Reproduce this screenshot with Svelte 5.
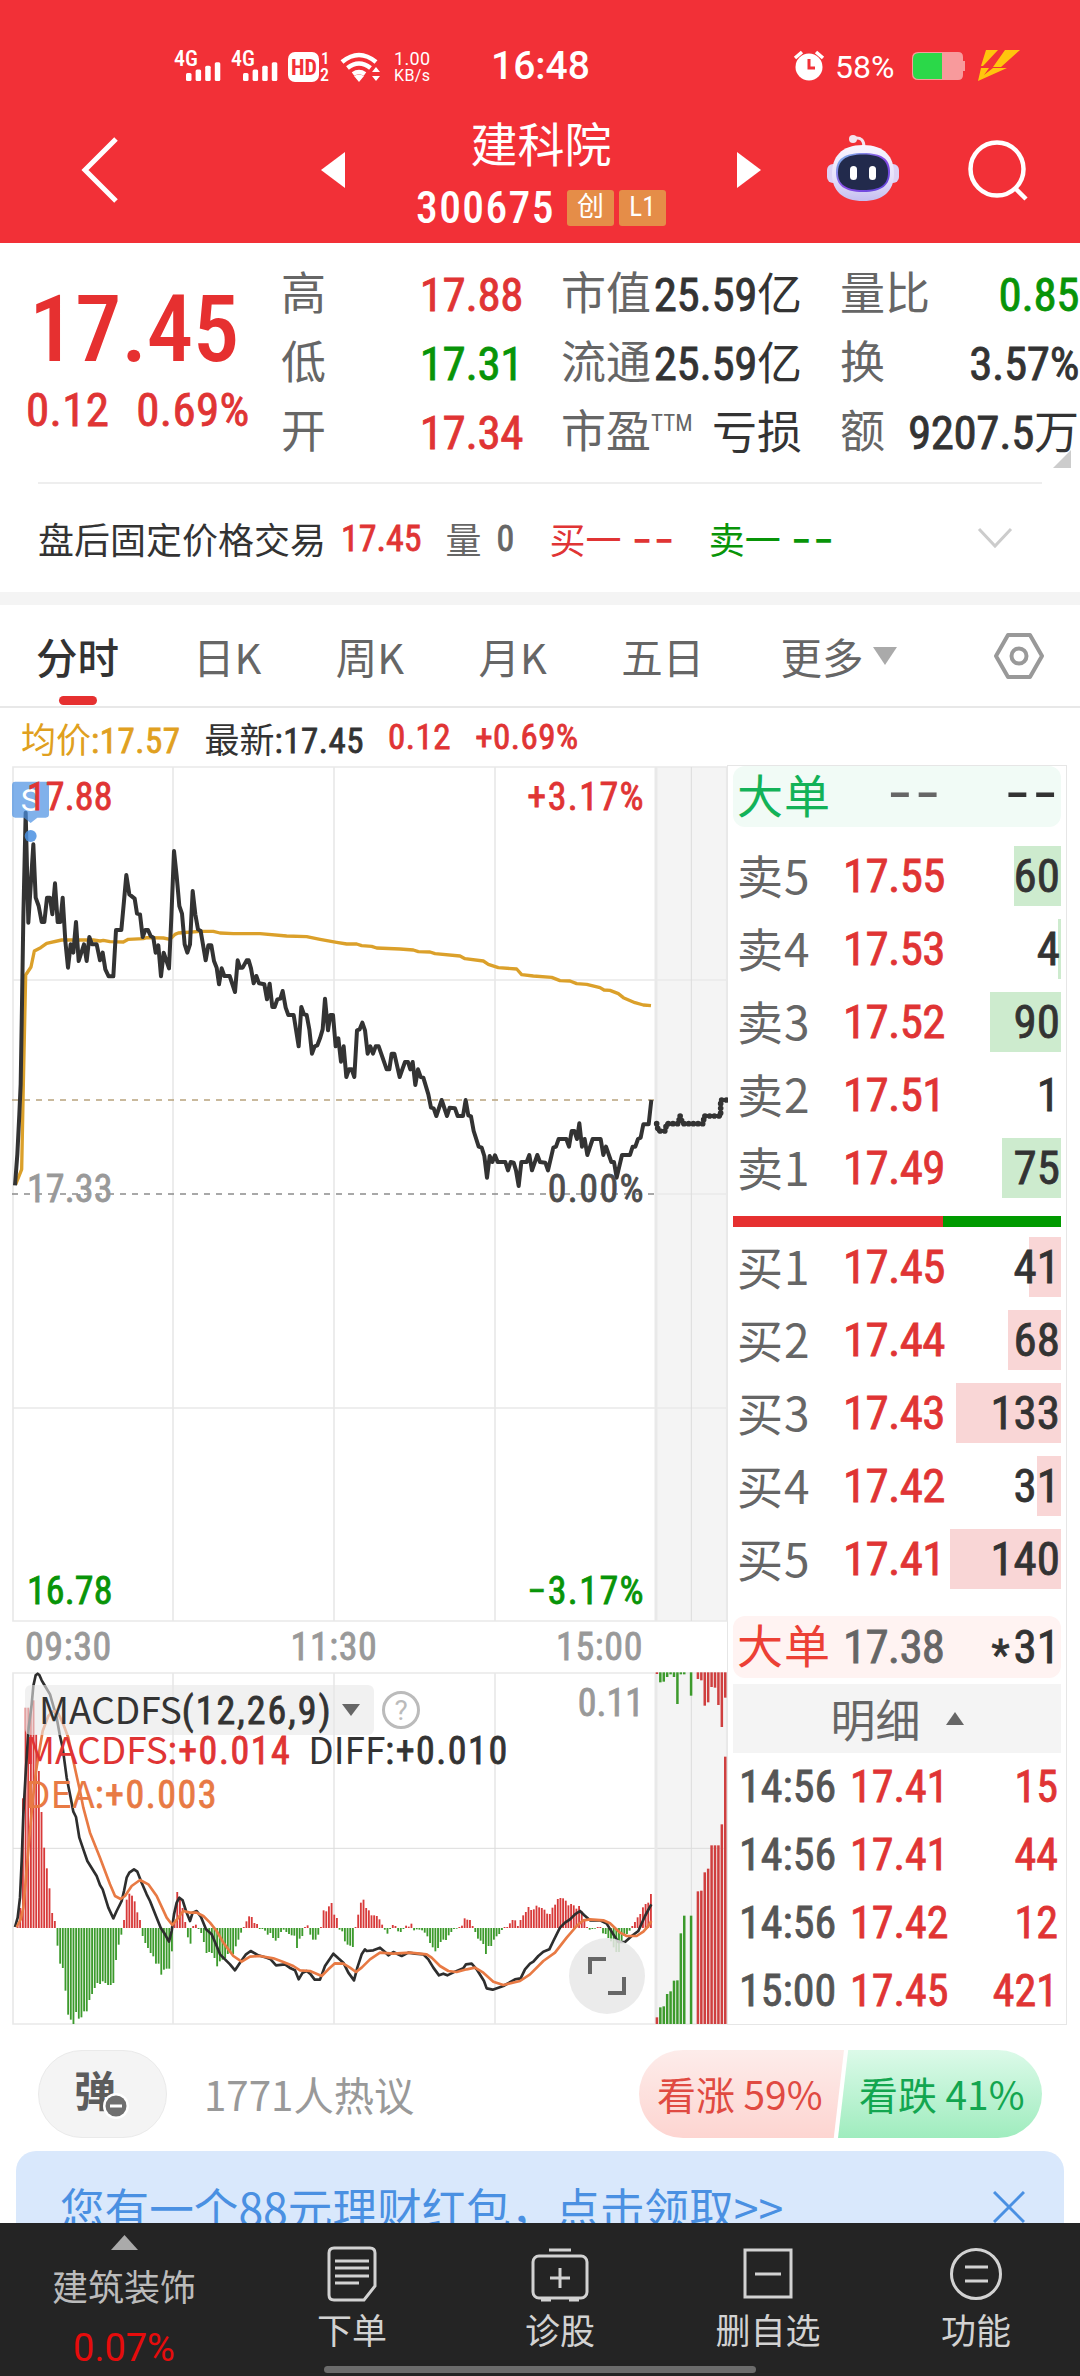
<script>
    const stats = [
        { label: '高', value: '17.88', tone: 'up' },
        { label: '市值', value: '25.59', unit: '亿' },
        { label: '量比', value: '0.85', tone: 'down' },
        { label: '低', value: '17.31', tone: 'down' },
        { label: '流通', value: '25.59', unit: '亿' },
        { label: '换', value: '3.57%' },
        { label: '开', value: '17.34', tone: 'up' },
        { label: '市盈', sup: 'TTM', value: '', unit: '亏损' },
        { label: '额', value: '9207.5', unit: '万' },
    ];

    const tabs = ['分时', '日K', '周K', '月K', '五日'];

    // bar = width of the volume bar
    const sells = [
        { label: '卖5', price: '17.55', volume: 60, bar: 47 },
        { label: '卖4', price: '17.53', volume: 4, bar: 3 },
        { label: '卖3', price: '17.52', volume: 90, bar: 71 },
        { label: '卖2', price: '17.51', volume: 1, bar: 0 },
        { label: '卖1', price: '17.49', volume: 75, bar: 59 },
    ];
    const buys = [
        { label: '买1', price: '17.45', volume: 41, bar: 32 },
        { label: '买2', price: '17.44', volume: 68, bar: 53 },
        { label: '买3', price: '17.43', volume: 133, bar: 105 },
        { label: '买4', price: '17.42', volume: 31, bar: 24 },
        { label: '买5', price: '17.41', volume: 140, bar: 111 },
    ];
    const trades = [
        { time: '14:56', price: '17.41', volume: 15 },
        { time: '14:56', price: '17.41', volume: 44 },
        { time: '14:56', price: '17.42', volume: 12 },
        { time: '15:00', price: '17.45', volume: 421 },
    ];

    const priceLine = `45,1303 52,1210 58,1090 62,1000 66,760 70,500 77,185 85,515 100,280 107,440 116,465 125,513 133,513 141,440
        150,440 157,490 165,397 173,513 181,513 188,440 196,570 204,650 212,580 220,605 228,513 236,630 252,580 260,630 268,558
        276,580 290,580 300,628 308,605 316,655 326,676 340,676 348,537 364,537 372,450 379,372 388,430 404,443 411,488 420,490
        428,558 436,537 444,537 452,555 460,560 467,605 475,583 483,676 491,605 507,652 514,500 522,300 530,375 538,465 546,488
        554,580 562,605 570,580 578,420 586,490 594,535 602,540 617,628 625,583 634,583 642,630 650,650 657,700 665,652 673,675
        689,675 705,723 713,628 720,650 728,650 740,628 746,628 753,652 761,697 769,675 777,697 793,700 801,745 809,698 817,768
        824,768 832,745 841,743 848,720 857,770 865,792 881,792 896,886 904,768 912,790 920,792 928,835 936,908 944,886 952,883
        960,862 968,835 975,743 984,838 991,792 999,792 1007,886 1015,862 1023,932 1031,886 1039,978 1047,955 1055,955 1063,978
        1071,838 1079,835 1087,815 1095,838 1103,908 1111,886 1119,908 1127,886 1136,886 1160,955 1168,955 1175,908 1183,908
        1199,978 1207,955 1215,933 1224,933 1231,955 1238,933 1246,1002 1254,955 1262,978 1270,980 1285,1030 1293,1070 1301,1072
        1309,1095 1325,1047 1341,1095 1349,1070 1365,1072 1373,1095 1389,1095 1397,1047 1405,1093 1413,1096 1421,1140 1436,1187
        1445,1190 1453,1215 1461,1280 1469,1215 1477,1233 1485,1213 1493,1233 1516,1233 1524,1258 1532,1233 1541,1235 1548,1258
        1556,1305 1564,1233 1580,1233 1588,1212 1596,1258 1612,1212 1620,1233 1636,1235 1644,1258 1660,1190 1668,1187 1676,1164
        1699,1164 1707,1187 1715,1140 1723,1140 1731,1164 1738,1117 1746,1187 1754,1164 1762,1212 1778,1164 1802,1164 1810,1212
        1818,1187 1834,1233 1842,1233 1850,1280 1866,1212 1890,1212 1898,1187 1906,1187 1914,1164 1922,1160 1930,1120 1946,1120
        1954,1047`;

    const avgLine = `47,1300 65,1255 70,1000 77,672 93,648 103,600 122,590 140,577 185,567 280,567 300,570 310,568 330,572 370,573
        385,565 430,563 440,560 490,561 510,565 525,550 535,546 600,541 640,541 660,546 700,548 780,548 860,555 920,557 960,565
        1010,574 1040,579 1070,579 1085,584 1115,586 1130,591 1200,594 1240,597 1255,602 1290,603 1305,608 1380,615 1395,623
        1450,630 1465,640 1495,650 1550,654 1565,671 1600,675 1655,679 1680,689 1710,690 1730,698 1760,700 1800,710 1812,717
        1830,718 1855,728 1870,740 1905,755 1930,762 1953,764`;

    const afterLine = `1970,1118 1975,1140 1995,1140 2000,1118 2035,1118 2040,1094 2048,1118 2110,1118 2112,1095 2162,1095
        2162,1047 2180,1047`;

    const macd = [
        0, 5, 60, 389, 661, 661, 656, 683, 580, 471, 348, 241, 179, 119, 45, 21, -53, -107, -120, -188, -260, -275, -288, -252,
        -272, -268, -250, -250, -216, -198, -180, -165, -168, -160, -165, -171, -171, -165, -96, -50, -20, 24, 85, 103, 97, 80,
        47, 24, -24, -45, -60, -75, -85, -107, -107, -140, -125, -122, -122, -70, 20, 108, 85, 60, 18, -28, -47, 6, 10, -3, -15,
        -42, -75, -72, -75, -90, -115, -100, -95, -90, -78, -75, -78, -55, -35, -14, 3, 20, 35, 33, 15, 12, -3, -3, -8, -20, -15,
        -30, -38, -30, -12, -5, -12, -18, -22, -23, -60, -32, -24, 3, 8, -20, -35, -35, -20, 3, 53, 50, 65, 75, 40, 30, -5, -10,
        -40, -50, -53, -57, 3, 40, 76, 85, 60, 53, 38, 38, 36, 26, 10, -5, -17, -3, 9, 6, -10, -12, -3, 7, 4, 13, -7, -4, -5, -7,
        -14, -25, -45, -58, -70, -60, -42, -35, -36, -22, -12, -3, -2, 3, 7, 29, 25, 24, 6, -12, -32, -38, -48, -78, -54, -54,
        -35, -25, -18, -6, 3, 3, 14, 24, 23, 6, 24, 38, 48, 63, 54, 56, 67, 62, 60, 55, 43, 42, 61, 70, 87, 90, 89, 82, 68, 72,
        68, 58, 66, 50, 25, 3, -5, -3, -2, 3, 3, -16, -18, -30, -40, -58, -72, -72, -38, -24, -18, -8, 6, 18, 32, 42, 62, 72, 76,
        102,
    ];
    const pitch = (1953 - 45) / (macd.length - 1);

    const diffLine = `45,1098 53,1070 60,1010 65,900 70,760 78,620 86,500 95,430 100,375 107,343 113,338 118,342 125,358 135,375
        150,400 160,435 170,470 180,525 188,560 200,650 212,710 220,752 228,768 238,830 250,865 262,900 290,945 300,972 308,985
        325,1040 340,1072 350,1050 365,1020 372,990 380,950 388,935 402,925 412,932 425,965 440,1000 450,1020 470,1070 482,1100
        495,1120 507,1142 515,1110 522,1060 530,1025 538,1010 548,1018 558,1050 570,1080 578,1055 590,1050 603,1068 618,1105
        635,1120 650,1155 660,1180 675,1195 690,1210 705,1228 720,1205 738,1180 752,1170 775,1183 800,1190 812,1195 828,1213
        855,1210 872,1222 885,1228 896,1255 908,1235 920,1230 932,1240 944,1256 960,1256 975,1215 1000,1178 1015,1192 1030,1205
        1045,1235 1062,1258 1072,1220 1085,1180 1095,1165 1100,1170 1120,1168 1140,1160 1155,1173 1165,1183 1180,1173 1205,1185
        1225,1175 1245,1178 1270,1180 1285,1195 1300,1220 1317,1243 1330,1238 1342,1243 1365,1232 1390,1222 1398,1210 1415,1208
        1430,1225 1452,1260 1460,1282 1478,1286 1510,1275 1545,1255 1562,1252 1575,1225 1590,1208 1600,1202 1615,1185 1630,1172
        1648,1165 1660,1140 1680,1100 1695,1085 1710,1075 1725,1060 1740,1050 1752,1062 1770,1078 1800,1078 1820,1088 1840,1120
        1855,1143 1875,1143 1895,1125 1915,1110 1935,1065 1954,1030`;

    const deaLine = `50,1098 62,1075 70,1040 78,950 88,830 98,720 108,630 118,570 128,510 145,465 160,450 175,458 190,490 205,530
        220,600 240,690 250,740 270,815 300,890 330,970 345,1005 362,1014 375,1005 395,975 420,957 445,970 470,1005 500,1070
        517,1092 535,1070 550,1050 570,1055 590,1055 610,1065 630,1085 650,1110 670,1145 700,1185 725,1202 750,1187 780,1185
        820,1192 850,1203 880,1215 900,1228 930,1230 965,1245 985,1225 1005,1207 1030,1208 1050,1220 1068,1233 1085,1220
        1110,1195 1140,1175 1180,1178 1230,1175 1280,1180 1295,1190 1320,1215 1345,1230 1370,1233 1400,1225 1425,1220 1450,1235
        1480,1262 1510,1272 1560,1260 1590,1240 1630,1200 1665,1175 1700,1130 1730,1095 1750,1078 1770,1075 1810,1078 1830,1087
        1860,1115 1880,1125 1910,1125 1930,1112 1945,1095 1954,1080`;

    // after-hours bars: [slot, from the top, from the bottom, rising]
    const afterBars = [
        [0, 5, 20, 1], [1, 30, 50, 0], [2, 28, 53, 0], [3, 14, 90, 0], [4, 6, 98, 0], [5, 14, 130, 0], [6, 95, 131, 0],
        [7, 6, 272, 0], [8, 6, 325, 0], [10, 70, 325, 0], [12, 20, 398, 1], [13, 24, 400, 1], [14, 100, 455, 1],
        [15, 90, 466, 1], [16, 44, 536, 1], [17, 46, 536, 1], [18, 98, 536, 1], [19, 164, 599, 1], [20, 76, 802, 1],
    ];
</script>


<style>
    :global(body) {
        background: #fff;
    }

    .app {
        display: flex;
        flex-direction: column;
        width: 1080px;
        height: 2376px;
        overflow: hidden;
        font-family: "Roboto Condensed", "Noto Sans CJK SC", sans-serif;
        color: #333;
        white-space: nowrap;
    }
    .cjk {
        font-family: "Noto Sans CJK SC", sans-serif;
    }
    .up { color: #e03434; }
    .down { color: #089408; }

    /* digits sit between regular and medium */
    .price p, .stats span, .fixed .num, .legend, .minute span, .axis, .macd, .book {
        -webkit-text-stroke: .8px;
    }
    .stats i, .legend i, .macd .cjk, .book .cjk, .detail, .help {
        -webkit-text-stroke: 0;
    }

    header {
        flex: none;
        height: 243px;
        background: #f23037;
        color: #fff;
    }
    .status {
        display: flex;
        align-items: center;
        padding: 48px 60px 0 172px;
        height: 36px;
        font-family: Roboto, sans-serif;
    }
    .status .clock {
        margin-left: 59px;
        font-size: 39px;
        font-weight: 500;
    }
    .status .percent {
        margin: 2px 12px 0 10px;
        font-size: 32px;
        width: 65px;
    }
    .status .alarm {
        margin-left: auto;
    }
    .status .bolt {
        margin-left: 12px;
    }

    .titlebar {
        display: flex;
        align-items: center;
        height: 159px;
        padding-top: 13px;
        box-sizing: border-box;
    }
    .titlebar .back { margin-left: 80px; }
    .titlebar .prev { margin-left: 200px; }
    .titlebar .next { margin-left: 69px; }
    .titlebar .robot { margin: -5px 0 0 66px; }
    .titlebar .search { margin-left: 67px; }
    .titlebar .name {
        width: 254px;
        margin: 10px 0 0 69px;
        text-align: center;
    }
    .name h1 {
        margin: 0;
        font-size: 47px;
        font-weight: 400;
        line-height: 66px;
    }
    .name p {
        display: flex;
        align-items: center;
        margin: 0 0 0 2px;
        height: 58px;
        font-size: 43.5px;
        font-weight: 500;
        letter-spacing: 1.4px;
    }
    .name b {
        width: 47px;
        height: 36px;
        margin-left: 5px;
        border-radius: 3px;
        background: #e58d48;
        font-size: 27px;
        font-weight: 400;
        line-height: 35px;
        letter-spacing: 0;
    }
    .name b:first-of-type {
        margin-left: 12px;
    }

    main {
        flex: 1;
        min-height: 0;
        overflow: hidden;
    }

    .quote {
        position: relative;
        display: flex;
        height: 239px;
    }
    .price {
        width: 281px;
    }
    .price strong {
        display: block;
        margin: 34px 0 0 29px;
        font-size: 93px;
        font-weight: 500;
        line-height: 106px;
        letter-spacing: -.4px;
        color: #e63030;
    }
    .price p {
        display: flex;
        gap: 27px;
        margin: 0 0 0 26px;
        font-size: 47px;
        line-height: 53px;
        letter-spacing: .3px;
    }
    .stats {
        display: grid;
        grid-template-columns: 242px 241px 239px;
        grid-auto-rows: 69px;
        column-gap: 38px;
        padding-top: 17px;
    }
    .stats div {
        display: flex;
        justify-content: space-between;
        font-size: 47px;
        line-height: 69px;
    }
    .stats label {
        font-size: 45px;
        color: #666;
    }
    .stats sup {
        font-size: 23px;
        line-height: 0;
        vertical-align: 17px;
    }
    .stats span {
        letter-spacing: -.4px;
    }
    .stats i {
        font-style: normal;
        font-size: 45px;
        letter-spacing: 0;
    }
    .corner {
        position: absolute;
        right: 9px;
        bottom: 14px;
        border: 9px solid transparent;
        border-right-color: #ccc;
        border-bottom-color: #ccc;
    }

    .fixed {
        display: flex;
        align-items: center;
        height: 108px;
        margin: 0 38px;
        border-top: 2px solid #eee;
        font-size: 36px;
    }
    .fixed span { margin-left: 15px; }
    .fixed span.gap { margin-left: 24px; }
    .fixed span.wide { margin-left: 35px; }
    .fixed span.wide.down { margin-left: 38px; }
    .fixed .muted { color: #666; }
    .fixed .num { padding-top: 2px; }
    .fixed svg { margin: 0 29px 0 auto; }
    .fixed span.dash {
        margin: 0 -5px 0 10px;
        font-size: 46px;
        line-height: 46px;
    }

    .dash {
        font-family: Inter, sans-serif;
        letter-spacing: 1px;
    }

    .band {
        height: 13px;
        background: #f4f4f4;
    }

    nav.tabs {
        display: flex;
        align-items: center;
        height: 101px;
        padding: 0 36px;
        border-bottom: 2px solid #e8e8e8;
        font-family: "Noto Sans CJK SC", sans-serif;
        font-size: 41.5px;
        color: #666;
    }
    .tabs a {
        position: relative;
        margin-right: 74.400px;
    }
    .tabs a.active {
        margin-right: 74px;
        font-weight: 500;
        color: #333;
    }
    .tabs a.active::after {
        content: "";
        position: absolute;
        left: 23px;
        bottom: -19px;
        width: 38px;
        height: 9px;
        border-radius: 5px;
        background: #e63030;
    }
    .tabs .more {
        display: flex;
        align-items: center;
        gap: 9px;
        margin-left: 2px;
    }
    .tabs .gear { margin-left: auto; }

    .legend {
        display: flex;
        align-items: center;
        height: 57px;
        padding: 2px 0 0 21px;
        box-sizing: border-box;
        font-size: 35px;
        letter-spacing: .5px;
    }
    .legend i {
        font-style: normal;
        letter-spacing: 0;
    }
    .legend span { margin-right: 24px; }
    .legend .avg { color: #e0a020; }

    .board {
        display: flex;
        height: 1260px;
        padding-left: 12px;
    }
    .charts {
        width: 715px;
    }
    .charts svg {
        display: block;
    }
    .minute, .macd {
        position: relative;
        font-size: 38px;
        line-height: 44px;
    }
    .minute { height: 857px; }
    .macd { height: 353px; }
    .minute span {
        position: absolute;
        left: 15px;
        letter-spacing: .1px;
    }
    .minute span.right {
        left: auto;
        right: 82px;
        letter-spacing: 1.4px;
    }
    .minute .high { top: 10px; }
    .minute .mid { top: 402px; color: #999; }
    .minute .mid.right { color: #4d4d4d; }
    .minute .low { top: 804px; }
    .marker text {
        font-family: Roboto, sans-serif;
    }
    .axis {
        display: flex;
        justify-content: space-between;
        height: 50px;
        padding: 0 84px 0 13px;
        font-size: 38px;
        line-height: 51px;
        letter-spacing: .6px;
        color: #999;
    }
    .chip {
        position: absolute;
        left: 13px;
        top: 13px;
        display: flex;
        align-items: center;
        gap: 9px;
        width: 349px;
        height: 50px;
        padding-left: 14px;
        box-sizing: border-box;
        border-radius: 6px;
        background: rgba(232, 232, 232, .6);
        letter-spacing: 2px;
    }
    .macd .cjk {
        font-size: 37px;
        font-style: normal;
        line-height: 40px;
        letter-spacing: 0;
    }
    .macd p {
        position: absolute;
        left: 13px;
        top: 56px;
        margin: 0;
        letter-spacing: 1.5px;
        line-height: 42px;
    }
    .macd p span { margin-right: 17px; }
    .macd p .dea { color: #e87a44; }
    .help {
        position: absolute;
        left: 370px;
        top: 19px;
        width: 32px;
        height: 32px;
        border: 3px solid #bbb;
        border-radius: 50%;
        font-family: Roboto, sans-serif;
        font-size: 28px;
        line-height: 33px;
        text-align: center;
        color: #bbb;
    }
    .peak {
        position: absolute;
        right: 83px;
        top: 9px;
        color: #999;
    }
    .expand {
        position: absolute;
        left: 557px;
        top: 266px;
        display: grid;
        place-items: center;
        width: 76px;
        height: 76px;
        border-radius: 50%;
        background: rgba(232, 232, 232, .85);
    }

    .book {
        width: 328px;
        padding: 0 5px;
        border: 1px solid #e6e6e6;
        font-size: 47px;
    }
    .big, .level {
        display: grid;
        grid-template-columns: 106px 130px 1fr;
        align-items: center;
        padding: 0 1px 2px 4px;
        box-sizing: border-box;
    }
    .big {
        height: 61px;
        border-radius: 12px;
        background: #f1fbf6;
    }
    .big .cjk, .level .cjk {
        font-size: 46px;
        line-height: 54px;
        letter-spacing: 1px;
        color: #666;
    }
    .big .cjk { padding-bottom: 6px; }
    .level .cjk { padding-bottom: 3px; }
    .big :last-child, .level :last-child { text-align: right; }
    .big .grey { color: #666; letter-spacing: -.8px; }
    .big .dash {
        padding-bottom: 9px;
        font-size: 56px;
        line-height: 48px;
        letter-spacing: 2px;
        -webkit-text-stroke: 0;
    }
    .big .dash.grey { padding-left: 44px; }
    .big small {
        position: relative;
        top: 6px;
        margin-right: 4px;
        font-size: 42px;
    }
    .big .cjk.green { color: #13b258; }
    .big .cjk.red { color: #ec4035; }
    .big.bid {
        margin-top: 27px;
        height: 62px;
        background: #fff3f2;
    }
    .level {
        position: relative;
        height: 60px;
        margin-bottom: 13px;
    }
    .level .bar {
        position: absolute;
        right: 0;
        top: 0;
        bottom: 0;
        background: #cdebce;
    }
    .level.buy .bar { background: #f9d6d6; }
    .level span { position: relative; }
    .level .up { letter-spacing: -.7px; }
    .asks { padding-top: 19px; }
    .ratio {
        display: flex;
        height: 11px;
        margin: 18px 0 10px;
    }
    .ratio i:first-child { width: 210px; background: #e63030; }
    .ratio i:last-child { flex: 1; background: #009a00; }
    .level:last-child { margin-bottom: 0; }
    .detail {
        display: flex;
        align-items: center;
        justify-content: center;
        gap: 25px;
        height: 69px;
        margin-top: 6px;
        background: #f4f4f4;
        font-size: 45px;
        color: #666;
    }
    .trade {
        display: grid;
        grid-template-columns: 111px 120px 1fr;
        height: 68px;
        padding: 0 3px 0 6px;
        font-size: 44px;
        line-height: 69px;
    }
    .trade :last-child { text-align: right; }
    .trade .time { color: #555; }

    .talk {
        display: flex;
        align-items: center;
        height: 88px;
        padding: 25px 38px 0;
        font-family: "Noto Sans CJK SC", sans-serif;
        font-size: 40.300px;
        color: #999;
    }
    .danmu {
        position: relative;
        display: flex;
        align-items: center;
        width: 127px;
        height: 86px;
        border: 1px solid #eaeaea;
        border-radius: 44px;
        background: #f4f4f4;
        font-size: 42px;
        font-weight: 700;
        line-height: 76px;
        color: #5c5c5c;
    }
    .danmu span {
        margin: 0 0 10px 35px;
    }
    .danmu svg {
        position: absolute;
        left: 63px;
        top: 41px;
    }
    .count { margin: -2px 0 0 37px; }
    .vote {
        display: flex;
        width: 403px;
        height: 88px;
        margin-left: auto;
        border-radius: 44px;
        overflow: hidden;
        font-size: 38.900px;
        line-height: 86px;
    }
    .bull {
        width: 205px;
        padding-left: 18px;
        box-sizing: border-box;
        clip-path: polygon(0 0, 100% 0, 95% 100%, 0 100%);
        background: linear-gradient(#fdecea, #fdd5d1);
        color: #e04a42;
    }
    .bear {
        flex: 1;
        margin-left: -6px;
        padding-left: 21px;
        clip-path: polygon(5% 0, 100% 0, 100% 100%, 0 100%);
        background: linear-gradient(#dcfae9, #9fecbe);
        color: #13a650;
    }

    .banner {
        display: flex;
        justify-content: space-between;
        height: 110px;
        margin: 13px 16px 0;
        padding: 0 39px 0 44px;
        border-radius: 20px;
        background: #d9e8fc;
        font-family: "Noto Sans CJK SC", sans-serif;
        font-size: 44.600px;
        line-height: 112px;
        color: #4a90e2;
    }
    .banner svg { margin-top: 40px; }

    footer {
        position: relative;
        flex: none;
        display: flex;
        height: 153px;
        background: #242424;
        font-family: "Noto Sans CJK SC", sans-serif;
        font-size: 35px;
        line-height: 44px;
        text-align: center;
        color: #d2d2d2;
    }
    footer div {
        display: flex;
        flex-direction: column;
        align-items: center;
        width: 208px;
        padding-top: 22px;
    }
    footer div svg { height: 58px; margin-bottom: 4px; }
    footer div.sector {
        width: 248px;
        padding-top: 12px;
        color: #bbb;
        font-size: 36px;
    }
    footer .sector svg { height: 15px; margin-bottom: 13px; }
    footer .sector b {
        margin-top: 19px;
        font-family: Roboto, sans-serif;
        font-size: 38px;
        font-weight: 400;
        color: #e60c0c;
    }
    .home {
        position: absolute;
        left: 324px;
        bottom: 3px;
        width: 432px;
        height: 7px;
        border-radius: 4px;
        background: #6c6c6c;
    }
</style>


<div class="app">
    <header>
        <div class="status">
            <svg width="260" height="36" viewBox="0 0 260 36" fill="#fff" font-family="Roboto Condensed" font-weight="500">
                {#each [0, 57] as x}
                    <text x={x + 2} y="18" font-size="22">4G</text>
                    {#each [0, 1, 2, 3] as n}
                        <rect x={x + 14 + n * 9.6} y={25 - n * 3.6} width="5.5" height={8 + n * 3.6} rx="1.5" />
                    {/each}
                {/each}
                <rect x="116" y="4" width="31" height="30" rx="7" />
                <text x="119" y="27" font-size="22" fill="#f23037" font-weight="700">HD</text>
                <text x="149" y="16" font-size="17">1</text>
                <text x="148" y="33" font-size="18">2</text>
                <g fill="none" stroke="#fff" stroke-width="4.5">
                    <path d="M170 14q17-14 34 0" />
                    <path d="M175.500 20q11.500-9 23 0" />
                    <path d="M181 26q6-4 12 0" />
                </g>
                <path d="M187 34l-5-6q5-3 10 0zM200 24l4-5 4 5zM200 28h8l-4 5z" />
                <text x="222" y="17" font-size="18" font-family="Roboto" font-weight="400" textLength="36">1.00</text>
                <text x="222" y="33" font-size="16" font-family="Roboto" font-weight="400" textLength="36">KB/s</text>
            </svg>
            <span class="clock">16:48</span>
            <svg class="alarm" width="32" height="32" viewBox="0 0 32 32" fill="none" stroke="#fff" stroke-width="3.500">
                <circle cx="16" cy="17" r="13.500" fill="#fff" stroke="none" />
                <path d="M2 8l7-6M30 8l-7-6" />
                <path d="M16 9v9h6" stroke="#f23037" stroke-width="3" />
            </svg>
            <span class="percent">58%</span>
            <svg width="54" height="28" viewBox="0 0 54 28">
                <path d="M6 0h40q5 0 5 5v4h2v10h-2v4q0 5-5 5H6q-6 0-6-6V6q0-6 6-6z" fill="#f89a9c" />
                <path d="M30 1H7Q1 1 1 7v14q0 6 6 6h23z" fill="#2bd849" />
            </svg>
            <svg class="bolt" width="42" height="32" viewBox="0 0 42 32" fill="#ffc50d">
                <path d="M8 0h12L5 16H3zM27 0h15L23 17h-8z" />
                <path d="M3 18h8l-5 7 9-7h14L0 31z" />
            </svg>
        </div>
        <div class="titlebar">
            <svg class="back" width="41" height="70" viewBox="0 0 41 70" fill="none" stroke="#fff" stroke-width="5"><path d="M36 4L5 35l31 31" /></svg>
            <svg class="prev" width="24" height="36" viewBox="0 0 24 36" fill="#fff"><path d="M24 0v36L0 18z" /></svg>
            <div class="name">
                <h1>建科院</h1>
                <p>300675<b>创</b><b>L1</b></p>
            </div>
            <svg class="next" width="24" height="36" viewBox="0 0 24 36" fill="#fff"><path d="M0 0v36l24-18z" /></svg>
            <svg class="robot" width="72" height="70" viewBox="0 0 72 70">
                <defs>
                    <linearGradient id="shell" x1="0" y1="0" x2="0" y2="1">
                        <stop offset="0" stop-color="#f8f6ff" />
                        <stop offset=".6" stop-color="#e6e0fa" />
                        <stop offset="1" stop-color="#c4bdf0" />
                    </linearGradient>
                    <linearGradient id="rim" x1="0" y1="0" x2="1" y2="1">
                        <stop offset="0" stop-color="#7cc4e8" />
                        <stop offset=".5" stop-color="#8a4be6" />
                        <stop offset="1" stop-color="#5a48d8" />
                    </linearGradient>
                </defs>
                <path d="M37 14q0-10-9-9" fill="none" stroke="#f3e4ee" stroke-width="3" />
                <circle cx="26" cy="6" r="4" fill="#f3e4ee" />
                <rect x="0" y="31" width="72" height="19" rx="6" fill="#dcd2f5" />
                <path d="M36 12C58 12 67 24 67 41S56 68 36 68 5 58 5 41 14 12 36 12z" fill="url(#shell)" />
                <path d="M36 20c19 0 27 6 27 19s-8 20-27 20S9 52 9 39s8-19 27-19z" fill="url(#rim)" />
                <path d="M36 21.500c18 0 25 6 25 18S54 57 36 57s-25-6-25-17.500 7-18 25-18z" fill="#222a4c" />
                <rect x="23" y="33" width="7" height="14" rx="3.500" fill="#fff" />
                <rect x="42" y="33" width="7" height="14" rx="3.500" fill="#fff" />
            </svg>
            <svg class="search" width="64" height="64" viewBox="0 0 64 64" fill="none" stroke="#fff" stroke-width="4.500">
                <circle cx="31" cy="31" r="26.500" />
                <path d="M49 50l11 11" />
            </svg>
        </div>
    </header>

    <main>
        <section class="quote">
            <div class="price up">
                <strong>17.45</strong>
                <p><span>0.12</span><span>0.69%</span></p>
            </div>
            <div class="stats">
                {#each stats as s}
                    <div>
                        <label>{s.label}{#if s.sup}<sup>{s.sup}</sup>{/if}</label>
                        <span class={s.tone}>{s.value}{#if s.unit}<i>{s.unit}</i>{/if}</span>
                    </div>
                {/each}
            </div>
            <i class="corner"></i>
        </section>

        <section class="fixed">
            盘后固定价格交易
            <span class="num up">17.45</span>
            <span class="gap muted">量</span>
            <span class="num muted">0</span>
            <span class="wide up">买一</span><span class="dash up">--</span>
            <span class="wide down">卖一</span><span class="dash down">--</span>
            <svg width="36" height="22" viewBox="0 0 36 22" fill="none" stroke="#ccc" stroke-width="3"><path d="M2 2l16 17L34 2" /></svg>
        </section>

        <div class="band"></div>

        <nav class="tabs">
            {#each tabs as tab, i}
                <a class:active={i === 0}>{tab}</a>
            {/each}
            <span class="more">更多<svg width="24" height="18" fill="#aaa"><path d="M0 0h24L12 18z" /></svg></span>
            <svg class="gear" width="50" height="46" viewBox="0 0 50 46" fill="none" stroke="#999" stroke-width="4" stroke-linejoin="round">
                <path d="M14 2h22l12 21-12 21H14L2 23z" />
                <circle cx="25" cy="23" r="7.500" />
            </svg>
        </nav>

        <div class="legend">
            <span class="avg"><i>均价</i>:17.57</span>
            <span><i>最新</i>:17.45</span>
            <span class="up">0.12</span>
            <span class="up">+0.69%</span>
        </div>

        <section class="board">
            <div class="charts">
                <div class="minute">
                    <svg width="716" height="858" viewBox="36 42 2148 2574" fill="none">
                        <rect x="1965" y="48" width="216" height="2562" fill="#f4f4f4" />
                        <g stroke="#e9e9e9" stroke-width="5">
                            <path d="M39 48H2180V2610H39zM519 48V2610M1002 48V2610M1485 48V2610M39 687H2180M39 1971H2180M1965 1329H2180" />
                            <path d="M1968 48V2610" stroke-width="9" />
                            <path d="M2074 48V2610" stroke="#ddd" stroke-width="3" />
                        </g>
                        <path d="M36 1047H1962" stroke="#b8a27c" stroke-width="5" stroke-dasharray="18" />
                        <path d="M36 1329H1962" stroke="#8c8c8c" stroke-width="5" stroke-dasharray="18" />
                        <polyline points={avgLine} stroke="#dba02a" stroke-width="10" stroke-linejoin="round" />
                        <polyline points={priceLine} stroke="#333" stroke-width="12" stroke-linejoin="round" />
                        <polyline points={afterLine} stroke="#333" stroke-width="9" stroke-linejoin="round" />
                        <polyline points={afterLine} stroke="#333" stroke-width="17" stroke-linecap="round" stroke-dasharray="0 14" />
                        <g class="marker" fill="#4a90e2">
                            <path d="M46 92H137q10 0 10 10V190q0 10-10 10H112L92 216 72 200H46q-10 0-10-10V102q0-10 10-10z" fill-opacity=".7" />
                            <circle cx="92" cy="255" r="18" fill-opacity=".85" />
                            <text x="62" y="180" font-size="96" fill="#fff">S</text>
                        </g>
                    </svg>
                    <span class="high up">17.88</span>
                    <span class="high right up">+3.17%</span>
                    <span class="mid">17.33</span>
                    <span class="mid right">0.00%</span>
                    <span class="low down">16.78</span>
                    <span class="low right down">−3.17%</span>
                </div>

                <div class="axis"><span>09:30</span><span>11:30</span><span>15:00</span></div>

                <div class="macd">
                    <svg width="716" height="353" viewBox="36 333 2148 1059" fill="none">
                        <rect x="1965" y="336" width="216" height="1052" fill="#f4f4f4" />
                        <g stroke="#e9e9e9" stroke-width="5">
                            <path d="M39 336H2180V1389H39zM519 336V1389M1002 336V1389M1485 336V1389" />
                            <path d="M39 862H2180" stroke="#dcdcdc" stroke-width="3" />
                            <path d="M1968 336V1389" stroke-width="9" />
                            <path d="M2074 336V1389" stroke="#ddd" stroke-width="3" />
                        </g>
                        {#each macd as v, i}
                            <rect x={42 + i * pitch} y={v > 0 ? 1101 - v : 1101} width="5.500" height={Math.abs(v)} fill={v > 0 ? '#d83a3a' : '#3c9a2c'} />
                        {/each}
                        {#each afterBars as [slot, top, bottom, rising]}
                            <g fill={rising ? '#cf3f3f' : '#3c9a2c'}>
                                <rect x={1967 + slot * 10.250} y="334" width="7.500" height={top} />
                                <rect x={1967 + slot * 10.250} y={1389 - bottom} width="7.500" height={bottom} />
                            </g>
                        {/each}
                        <polyline points={diffLine} stroke="#2e2e2e" stroke-width="8" stroke-linejoin="round" />
                        <polyline points={deaLine} stroke="#e87a44" stroke-width="8" stroke-linejoin="round" />
                    </svg>
                    <div class="chip">
                        <span><i class="cjk">MACDFS</i>(12,26,9)</span>
                        <svg width="18" height="12" fill="#666"><path d="M0 0h18L9 12z" /></svg>
                    </div>
                    <span class="help">?</span>
                    <span class="peak">0.11</span>
                    <p>
                        <span class="up"><i class="cjk">MACDFS</i>:+0.014</span><span><i class="cjk">DIFF</i>:+0.010</span><br>
                        <span class="dea"><i class="cjk">DEA</i>:+0.003</span>
                    </p>
                    <span class="expand">
                        <svg width="40" height="40" viewBox="0 0 40 40" fill="none" stroke="#666" stroke-width="4">
                            <path d="M3 18V3h16M21 37h16V21" />
                        </svg>
                    </span>
                </div>
            </div>

            <aside class="book">
                <div class="big">
                    <span class="cjk green">大单</span>
                    <span class="dash grey">--</span>
                    <span class="dash">--</span>
                </div>
                <div class="asks">
                    {#each sells as row}
                        <div class="level">
                            <i class="bar" style:width="{row.bar}px"></i>
                            <span class="cjk">{row.label}</span>
                            <span class="up">{row.price}</span>
                            <span>{row.volume}</span>
                        </div>
                    {/each}
                </div>
                <div class="ratio"><i></i><i></i></div>
                <div>
                    {#each buys as row}
                        <div class="level buy">
                            <i class="bar" style:width="{row.bar}px"></i>
                            <span class="cjk">{row.label}</span>
                            <span class="up">{row.price}</span>
                            <span>{row.volume}</span>
                        </div>
                    {/each}
                </div>
                <div class="big bid">
                    <span class="cjk red">大单</span>
                    <span class="grey">17.38</span>
                    <span><small>*</small>31</span>
                </div>
                <div class="detail">明细<svg width="18" height="13" fill="#666"><path d="M9 0l9 13H0z" /></svg></div>
                {#each trades as t}
                    <div class="trade">
                        <span class="time">{t.time}</span>
                        <span class="up">{t.price}</span>
                        <span class="up">{t.volume}</span>
                    </div>
                {/each}
            </aside>
        </section>

        <section class="talk">
            <div class="danmu">
                <span>弹</span>
                <svg width="28" height="28" viewBox="0 0 28 28">
                    <circle cx="14" cy="14" r="13" fill="#fff" />
                    <circle cx="14" cy="14" r="10.500" fill="#707070" />
                    <path d="M8 14h12" stroke="#fff" stroke-width="3" />
                </svg>
            </div>
            <span class="count">1771人热议</span>
            <div class="vote">
                <div class="bull">看涨 59%</div>
                <div class="bear">看跌 41%</div>
            </div>
        </section>

        <section class="banner">
            <span>您有一个88元理财红包，点击领取&gt;&gt;</span>
            <svg width="32" height="32" viewBox="0 0 32 32" fill="none" stroke="#4a90e2" stroke-width="3"><path d="M1 1l30 30M31 1L1 31" /></svg>
        </section>
    </main>

    <footer>
        <div class="sector">
            <svg width="27" height="15" fill="#aaa"><path d="M13.500 0L27 15H0z" /></svg>
            <span>建筑装饰</span>
            <b>0.07%</b>
        </div>
        <div>
            <svg width="50" height="58" viewBox="0 0 50 58" fill="none" stroke="#d2d2d2" stroke-width="3">
                <path d="M7 3h36q5 0 5 5v33L37 55H7q-5 0-5-5V8q0-5 5-5z" />
                <path d="M8 16h34M8 23h34M8 31h34M8 38h24" />
            </svg>
            下单
        </div>
        <div>
            <svg width="58" height="58" viewBox="0 0 58 58" fill="none" stroke="#d2d2d2" stroke-width="3">
                <rect x="2" y="11" width="54" height="42" rx="6" />
                <path d="M18 5h22M10 55h10M38 55h10M29 23v20M19 33h20" />
            </svg>
            诊股
        </div>
        <div>
            <svg width="50" height="58" viewBox="0 0 50 58" fill="none" stroke="#d2d2d2" stroke-width="3">
                <path d="M2 5h46v47H2zM12 29h26" />
            </svg>
            删自选
        </div>
        <div>
            <svg width="54" height="58" viewBox="0 0 54 58" fill="none" stroke="#d2d2d2" stroke-width="3">
                <circle cx="27" cy="29" r="24.500" />
                <path d="M16 22h23M16 36h23" />
            </svg>
            功能
        </div>
        <i class="home"></i>
    </footer>
</div>
